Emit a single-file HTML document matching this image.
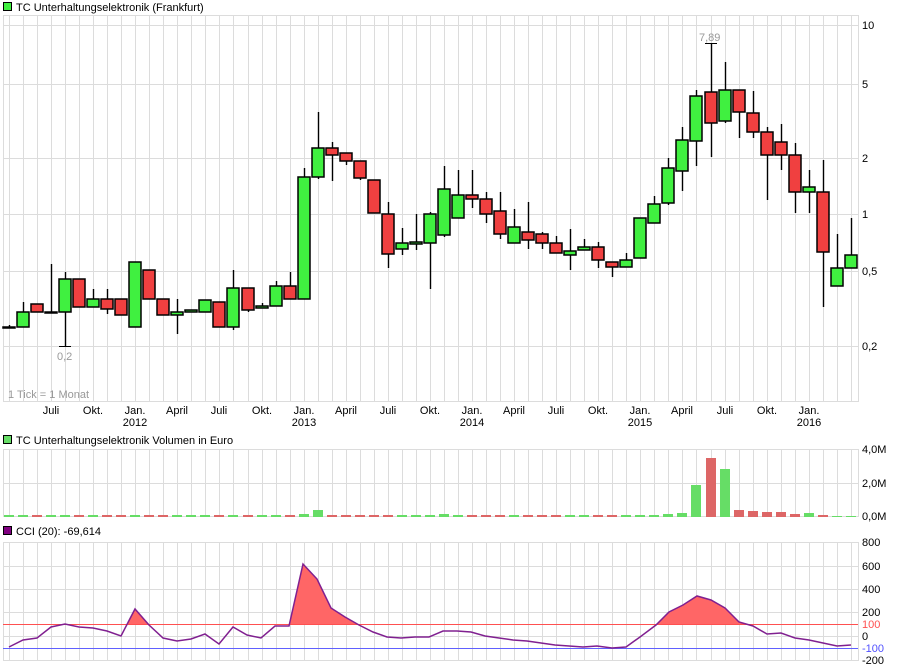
<!DOCTYPE html>
<html><head><meta charset="utf-8"><style>
html,body{margin:0;padding:0;background:#fff;width:900px;height:670px;overflow:hidden}
svg{display:block;font-family:"Liberation Sans",sans-serif}
</style></head><body>
<svg id="s" width="900" height="670" xmlns="http://www.w3.org/2000/svg">
<g id="grid" stroke="#dcdcdc" stroke-width="1" shape-rendering="crispEdges"></g>
<g id="plots"></g>
<g font-size="11" fill="#000">
<rect x="3.5" y="2.5" width="8" height="8" fill="#40f040" stroke="#000"/>
<text x="16" y="11">TC Unterhaltungselektronik (Frankfurt)</text>
<rect x="3.5" y="435.5" width="8" height="8" fill="#66dd66" stroke="#000"/>
<text x="16" y="444">TC Unterhaltungselektronik Volumen in Euro</text>
<rect x="3.5" y="526.5" width="8" height="8" fill="#800080" stroke="#000"/>
<text x="16" y="535">CCI (20): -69,614</text>
<text x="862" y="29">10</text><text x="862" y="88">5</text><text x="862" y="162">2</text>
<text x="862" y="218">1</text><text x="862" y="275">0,5</text><text x="862" y="350">0,2</text>
<text x="862" y="453">4,0M</text><text x="862" y="487">2,0M</text><text x="862" y="520">0,0M</text>
<text x="862" y="546">800</text><text x="862" y="570">600</text><text x="862" y="593">400</text>
<text x="862" y="616">200</text><text x="862" y="628" fill="#ff5050">100</text><text x="862" y="640">0</text>
<text x="862" y="652" fill="#5050ff">-100</text><text x="862" y="664">-200</text>
<g fill="#999"><text x="8" y="398">1 Tick = 1 Monat</text>
<text x="57" y="360">0,2</text><text x="699" y="41">7,89</text></g>
<g id="xl" text-anchor="middle"></g>
</g>
</svg>
<script>
var NS="http://www.w3.org/2000/svg",g=document.getElementById("grid"),p=document.getElementById("plots"),xl=document.getElementById("xl");
function el(par,t,a,txt){var e=document.createElementNS(NS,t);for(var k in a)e.setAttribute(k,a[k]);if(txt)e.textContent=txt;par.appendChild(e);return e}
function X(k){return Math.round(9+14.03*k)}
[[15,401],[449,516],[542,660]].forEach(function(r){
 for(var k=0;k<=60;k++){var x=X(k)+.5;el(g,"line",{x1:x,y1:r[0],x2:x,y2:r[1]});}
 el(g,"rect",{x:3.5,y:r[0]+.5,width:855,height:r[1]-r[0],fill:"none"});
});
[25,84,158,214,271,346,483,566,589,612,636].forEach(function(y){el(g,"line",{x1:3,y1:y+.5,x2:858,y2:y+.5})});
var C=[[0,327,327,325,328,1],[1,312,327,302,327,1],[2,304,312,304,312,0],[3,312,312,264,312,1],[4,279,312,272,346,1],[5,279,307,279,307,0],[6,299,307,289,307,1],[7,299,309,289,314,0],[8,299,315,299,315,0],[9,262,327,262,327,1],[10,270,299,270,299,0],[11,299,315,299,315,0],[12,312,315,299,334,1],[13,310,312,310,312,1],[14,300,312,300,312,1],[15,302,327,302,327,0],[16,288,327,270,330,1],[17,288,310,288,312,0],[18,306,308,303,308,1],[19,286,306,281,306,1],[20,286,299,272,299,0],[21,177,299,168,299,1],[22,148,177,112,179,1],[23,148,155,142,181,0],[24,153,161,153,165,0],[25,161,178,161,180,0],[26,180,213,180,213,0],[27,214,254,202,268,0],[28,243,249,228,255,1],[29,242,244,214,250,1],[30,214,243,212,289,1],[31,189,235,166,237,1],[32,195,218,170,218,1],[33,195,199,170,208,0],[34,199,214,192,223,0],[35,211,234,192,239,0],[36,227,243,209,243,1],[37,232,240,202,249,0],[38,234,243,232,249,0],[39,243,253,236,253,0],[40,251,255,229,270,1],[41,247,250,239,250,1],[42,247,260,242,268,0],[43,262,267,262,277,0],[44,260,267,253,267,1],[45,218,258,218,258,1],[46,204,223,196,223,1],[47,168,203,158,205,1],[48,140,171,127,191,1],[49,96,141,90,166,1],[50,92,123,43,157,0],[51,90,121,62,123,1],[52,90,112,90,138,0],[53,113,132,91,138,0],[54,132,155,127,200,0],[55,142,155,124,170,0],[56,155,192,143,213,0],[57,187,192,170,213,1],[58,192,252,160,307,0],[59,268,286,234,286,1],[60,255,268,218,268,1]];
C.forEach(function(c){var x=X(c[0]);
 el(p,"line",{x1:x+.5,y1:c[3],x2:x+.5,y2:c[4],stroke:"#000","stroke-width":1.4});
 var h=Math.max(c[2]-c[1],1);
 el(p,"rect",{x:x-6,y:c[1],width:12,height:h,fill:c[5]?"#40f040":"#f04040",stroke:"#000","stroke-width":1.5});
});
el(p,"line",{x1:59,y1:346.5,x2:71,y2:346.5,stroke:"#000"});
el(p,"line",{x1:705,y1:43.5,x2:717,y2:43.5,stroke:"#000"});
var V={21:514,22:510,31:514,46:515,47:514,48:513,49:485,50:458,51:469,52:510,53:511,54:512,55:512,56:514,57:513,58:515,59:516,60:516};
C.forEach(function(c){var k=c[0],top=V[k]||515;var x=X(k);
 el(p,"rect",{x:x-5,y:top,width:10,height:517-top,fill:c[5]?"#66dd66":"#dd6666"});});
var P=[[9,647],[23,640],[37,638],[51,627],[65,624],[79,627],[93,628],[107,631],[121,636],[135,609],[149,625],[163,638],[177,641],[191,639],[205,634],[219,644],[233,627],[247,635],[261,638],[275,626],[289,626],[303,564],[317,579],[331,608],[345,617],[359,625],[373,632],[387,637],[401,638],[415,637],[429,637],[443,631],[457,631],[471,632],[485,636],[499,638],[513,640],[527,641],[541,643],[555,645],[569,646],[583,647],[597,646],[612,648],[626,647],[640,637],[656,625],[669,612],[683,605],[697,596],[711,600],[725,608],[739,622],[753,626],[767,634],[781,633],[795,638],[809,640],[823,643],[837,646],[851,645]];
var pts=P.map(function(q){return q.join(",")}).join(" ");
el(p,"clipPath",{id:"cp"});el(document.getElementById("cp"),"rect",{x:0,y:540,width:900,height:84});
el(p,"polygon",{points:"9,624 "+pts+" 851,624",fill:"#ff6666","clip-path":"url(#cp)"});
el(p,"line",{x1:3,y1:624.5,x2:858,y2:624.5,stroke:"#ff5050"});
el(p,"line",{x1:3,y1:648.5,x2:858,y2:648.5,stroke:"#6060ff"});
el(p,"polyline",{points:pts,fill:"none",stroke:"#802090","stroke-width":1.5});
var M=["Juli","Okt.","Jan.","April"];
for(var k=3;k<=57;k+=3){var i=((k-3)/3)%4;el(xl,"text",{x:X(k),y:414},M[i]);
 if(i==2)el(xl,"text",{x:X(k),y:426},String(2012+(k-9)/12));}
</script>
</body></html>
